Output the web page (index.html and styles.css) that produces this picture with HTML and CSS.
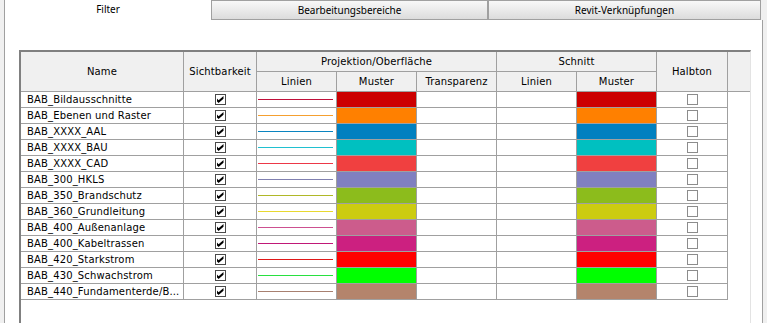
FILE: index.html
```html
<!DOCTYPE html>
<html>
	<head>
		<meta charset="utf-8">
		<title>Filter</title>
		<link rel="stylesheet" href="styles.css">
	</head>
	<body>
		<div class="dialog">
			<div class="tabs">
				<div class="tab active">Filter</div>
				<div class="tab mid">Bearbeitungsbereiche</div>
				<div class="tab last">Revit-Verknüpfungen</div>
			</div>
			<div class="panel">
				<div class="grid-box">
					<div class="grid">
						<div class="hd name">Name</div>
						<div class="hd vis">Sichtbarkeit</div>
						<div class="hd proj">Projektion/Oberfläche</div>
						<div class="hd cut">Schnitt</div>
						<div class="hd half">Halbton</div>
						<div class="hd extra"></div>
						<div class="hd">Linien</div>
						<div class="hd">Muster</div>
						<div class="hd">Transparenz</div>
						<div class="hd">Linien</div>
						<div class="hd">Muster</div>

						<div class="row r1">
							<div class="cell nm">BAB_Bildausschnitte</div>
							<div class="cell ck"><span class="box on"></span></div>
							<div class="cell"><span class="ln"></span></div>
							<div class="cell sw"></div>
							<div class="cell"></div>
							<div class="cell"></div>
							<div class="cell sw"></div>
							<div class="cell ck"><span class="box"></span></div>
							<div class="pad"></div>
						</div>
						<div class="row r2">
							<div class="cell nm">BAB_Ebenen und Raster</div>
							<div class="cell ck"><span class="box on"></span></div>
							<div class="cell"><span class="ln"></span></div>
							<div class="cell sw"></div>
							<div class="cell"></div>
							<div class="cell"></div>
							<div class="cell sw"></div>
							<div class="cell ck"><span class="box"></span></div>
							<div class="pad"></div>
						</div>
						<div class="row r3">
							<div class="cell nm">BAB_XXXX_AAL</div>
							<div class="cell ck"><span class="box on"></span></div>
							<div class="cell"><span class="ln"></span></div>
							<div class="cell sw"></div>
							<div class="cell"></div>
							<div class="cell"></div>
							<div class="cell sw"></div>
							<div class="cell ck"><span class="box"></span></div>
							<div class="pad"></div>
						</div>
						<div class="row r4">
							<div class="cell nm">BAB_XXXX_BAU</div>
							<div class="cell ck"><span class="box on"></span></div>
							<div class="cell"><span class="ln"></span></div>
							<div class="cell sw"></div>
							<div class="cell"></div>
							<div class="cell"></div>
							<div class="cell sw"></div>
							<div class="cell ck"><span class="box"></span></div>
							<div class="pad"></div>
						</div>
						<div class="row r5">
							<div class="cell nm">BAB_XXXX_CAD</div>
							<div class="cell ck"><span class="box on"></span></div>
							<div class="cell"><span class="ln"></span></div>
							<div class="cell sw"></div>
							<div class="cell"></div>
							<div class="cell"></div>
							<div class="cell sw"></div>
							<div class="cell ck"><span class="box"></span></div>
							<div class="pad"></div>
						</div>
						<div class="row r6">
							<div class="cell nm">BAB_300_HKLS</div>
							<div class="cell ck"><span class="box on"></span></div>
							<div class="cell"><span class="ln"></span></div>
							<div class="cell sw"></div>
							<div class="cell"></div>
							<div class="cell"></div>
							<div class="cell sw"></div>
							<div class="cell ck"><span class="box"></span></div>
							<div class="pad"></div>
						</div>
						<div class="row r7">
							<div class="cell nm">BAB_350_Brandschutz</div>
							<div class="cell ck"><span class="box on"></span></div>
							<div class="cell"><span class="ln"></span></div>
							<div class="cell sw"></div>
							<div class="cell"></div>
							<div class="cell"></div>
							<div class="cell sw"></div>
							<div class="cell ck"><span class="box"></span></div>
							<div class="pad"></div>
						</div>
						<div class="row r8">
							<div class="cell nm">BAB_360_Grundleitung</div>
							<div class="cell ck"><span class="box on"></span></div>
							<div class="cell"><span class="ln"></span></div>
							<div class="cell sw"></div>
							<div class="cell"></div>
							<div class="cell"></div>
							<div class="cell sw"></div>
							<div class="cell ck"><span class="box"></span></div>
							<div class="pad"></div>
						</div>
						<div class="row r9">
							<div class="cell nm">BAB_400_Außenanlage</div>
							<div class="cell ck"><span class="box on"></span></div>
							<div class="cell"><span class="ln"></span></div>
							<div class="cell sw"></div>
							<div class="cell"></div>
							<div class="cell"></div>
							<div class="cell sw"></div>
							<div class="cell ck"><span class="box"></span></div>
							<div class="pad"></div>
						</div>
						<div class="row r10">
							<div class="cell nm">BAB_400_Kabeltrassen</div>
							<div class="cell ck"><span class="box on"></span></div>
							<div class="cell"><span class="ln"></span></div>
							<div class="cell sw"></div>
							<div class="cell"></div>
							<div class="cell"></div>
							<div class="cell sw"></div>
							<div class="cell ck"><span class="box"></span></div>
							<div class="pad"></div>
						</div>
						<div class="row r11">
							<div class="cell nm">BAB_420_Starkstrom</div>
							<div class="cell ck"><span class="box on"></span></div>
							<div class="cell"><span class="ln"></span></div>
							<div class="cell sw"></div>
							<div class="cell"></div>
							<div class="cell"></div>
							<div class="cell sw"></div>
							<div class="cell ck"><span class="box"></span></div>
							<div class="pad"></div>
						</div>
						<div class="row r12">
							<div class="cell nm">BAB_430_Schwachstrom</div>
							<div class="cell ck"><span class="box on"></span></div>
							<div class="cell"><span class="ln"></span></div>
							<div class="cell sw"></div>
							<div class="cell"></div>
							<div class="cell"></div>
							<div class="cell sw"></div>
							<div class="cell ck"><span class="box"></span></div>
							<div class="pad"></div>
						</div>
						<div class="row r13">
							<div class="cell nm">BAB_440_Fundamenterde/B...</div>
							<div class="cell ck"><span class="box on"></span></div>
							<div class="cell"><span class="ln"></span></div>
							<div class="cell sw"></div>
							<div class="cell"></div>
							<div class="cell"></div>
							<div class="cell sw"></div>
							<div class="cell ck"><span class="box"></span></div>
							<div class="pad"></div>
						</div>
					</div>
				</div>
			</div>
		</div>
	</body>
</html>
```

FILE: styles.css
```css
*{
	margin: 0;
	padding: 0;
	box-sizing: border-box;
}
body{
	background: #f0f0f0;
	font-family: "DejaVu Sans", sans-serif;
	font-size: 10px;
	color: #000;
	overflow: hidden;
}
.dialog{
	margin-left: 4px;
	width: 759px;
	height: 323px;
	display: flex;
	flex-direction: column;
}

/* tabs */
.tabs{
	display: flex;
	height: 20px;
	flex: none;
}
.tab{
	height: 20px;
	border: 1px solid #a0a0a0;
	background: linear-gradient(#f8f8f8, #dcdcdc);
	font-family: "Noto Sans", sans-serif;
	font-size: 10px;
	line-height: 19px;
	text-align: center;
}
.tab.active{
	width: 207px;
	border: none;
	border-left: 1px solid #a0a0a0;
	background: #fff;
	line-height: 19px;
}
.tab.mid{width: 277px;}
.tab.last{width: 273px;}

/* content */
.panel{
	flex: 1;
	min-height: 0;
	display: flex;
	background: #fff;
	border-left: 1px solid #a0a0a0;
	border-right: 1px solid #a0a0a0;
	padding: 30px 11px 0 14px;
}
.grid-box{
	flex: 1;
	border-top: 2px solid #808080;
	border-left: 2px solid #808080;
	border-right: 1px solid #e3e3e3;
}
.grid{
	display: grid;
	grid-template-columns: 163px 73px repeat(5, 80px) 71px 22px;
	grid-template-rows: 20px 20px;
	grid-auto-rows: 16px;
	letter-spacing: 0.15px;
}
.hd{
	background: #f0f0f0;
	border-right: 1px solid #a0a0a0;
	border-bottom: 1px solid #a0a0a0;
	display: flex;
	align-items: center;
	justify-content: center;
	white-space: nowrap;
}
.hd.extra{border-right: none;}
.name, .vis, .half, .extra{grid-row: span 2;}
.proj{grid-column: span 3;}
.cut{grid-column: span 2;}

.row{display: contents;}
.cell{
	border-right: 1px solid #a0a0a0;
	border-bottom: 1px solid #a0a0a0;
	display: flex;
	align-items: center;
}
.nm{
	padding-left: 6px;
	white-space: nowrap;
	overflow: hidden;
	line-height: 15px;
}
.ck{justify-content: center;}
.box{
	width: 11px;
	height: 11px;
	border: 1px solid #8c8c8c;
	background: #fff;
	display: flex;
	align-items: center;
	justify-content: center;
}
.box.on{border-color: #4a4a4a;}
.box.on::after{
	content: "";
	width: 7px;
	height: 7px;
	background: #000;
	clip-path: polygon(0 30%, 30% 60%, 100% 0, 100% 40%, 30% 100%, 0 72%);
}
.ln{
	flex: 1;
	height: 1px;
	margin: 0 3px 0 1px;
	background: var(--line);
}

/* filter colours */
.r1{--line: #c0103a; --fill: #cc0000;}
.r2{--line: #f5a030; --fill: #ff8000;}
.r3{--line: #0a84c0; --fill: #0080c0;}
.r4{--line: #20c0d0; --fill: #00c0c0;}
.r5{--line: #ec3848; --fill: #f04040;}
.r6{--line: #8080b0; --fill: #8080c0;}
.r7{--line: #b0b828; --fill: #8cbc1c;}
.r8{--line: #e8d830; --fill: #cccc10;}
.r9{--line: #cc5090; --fill: #cc5c8c;}
.r10{--line: #c01878; --fill: #cc2080;}
.r11{--line: #e01818; --fill: #ff0000;}
.r12{--line: #28e040; --fill: #00ff00;}
.r13{--line: #a88070; --fill: #b4846c;}
.sw{background: var(--fill);}
```
